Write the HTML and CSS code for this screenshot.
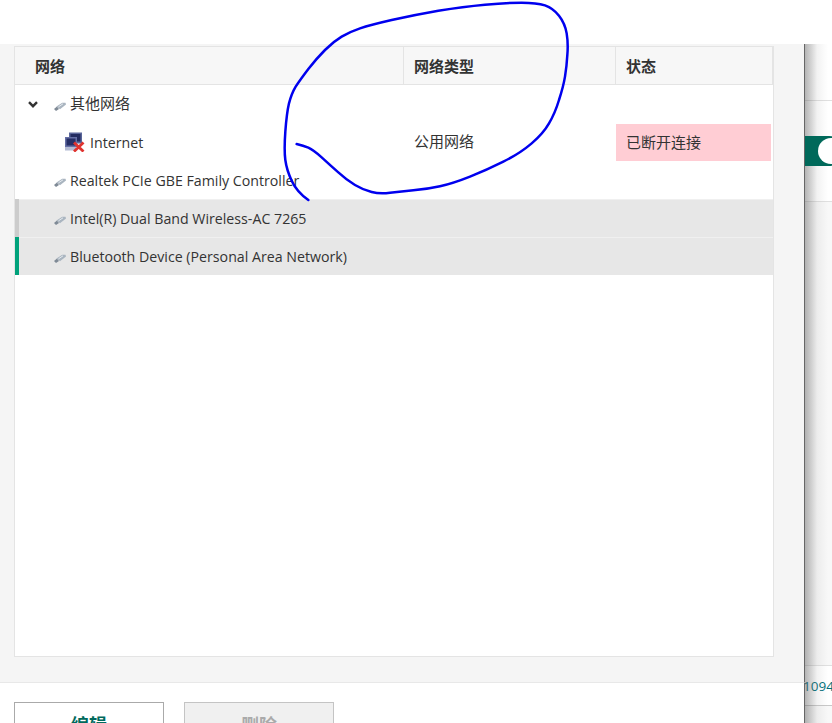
FILE: index.html
```html
<!DOCTYPE html>
<html lang="zh">
<head>
<meta charset="utf-8">
<title>网络</title>
<link rel="stylesheet" href="styles.css">
</head>
<body>
<div class="page">
  <main class="panel">
    <div class="panel-top"></div>
    <div class="panel-body">
      <div class="table">
        <div class="thead">
          <div class="th th-first">网络</div>
          <div class="th">网络类型</div>
          <div class="th">状态</div>
        </div>
        <div class="row">
          <div class="cell name name-group">
            <svg class="chevron" viewBox="0 0 10 7"><path d="M1 1.2l4 4 4-4" fill="none" stroke="#333" stroke-width="2.4"/></svg>
            <svg class="plug" viewBox="0 0 12 9"><path d="M0 7l3-2.5 2 2.5-3 2z" fill="#7f8a96"/><path d="M2.5 4.5L8.2 0.8l3.3 0 .5 1.8-6 4.6z" fill="#aab5c0"/><path d="M4.5 4.8l4.5-3" stroke="#e6ebf0" stroke-width="1"/></svg>
            <span class="zh">其他网络</span>
          </div>
          <div class="cell"></div>
          <div class="cell"></div>
        </div>
        <div class="row">
          <div class="cell name name-child">
            <svg class="net" viewBox="0 0 20 20">
              <rect x="4" y="0.5" width="13" height="11" fill="#5a669a"/>
              <rect x="5.5" y="2" width="10" height="7.5" fill="#232c60"/>
              <rect x="0" y="5" width="12" height="10" fill="#6670a6"/>
              <rect x="1.5" y="6.5" width="9" height="7" fill="#262f66"/>
              <rect x="0" y="15" width="11" height="3.5" fill="#b4bbd4"/>
              <path d="M9 10.5l9.5 9M18.5 10.5l-9.5 9" stroke="#e0332f" stroke-width="2.8"/>
            </svg>
            <span>Internet</span>
          </div>
          <div class="cell zh">公用网络</div>
          <div class="cell zh status-off">已断开连接</div>
        </div>
        <div class="row">
          <div class="cell name">
            <svg class="plug" viewBox="0 0 12 9"><path d="M0 7l3-2.5 2 2.5-3 2z" fill="#7f8a96"/><path d="M2.5 4.5L8.2 0.8l3.3 0 .5 1.8-6 4.6z" fill="#aab5c0"/><path d="M4.5 4.8l4.5-3" stroke="#e6ebf0" stroke-width="1"/></svg>
            <span>Realtek PCIe GBE Family Controller</span>
          </div>
          <div class="cell"></div>
          <div class="cell"></div>
        </div>
        <div class="row row-grey">
          <div class="cell name">
            <svg class="plug" viewBox="0 0 12 9"><path d="M0 7l3-2.5 2 2.5-3 2z" fill="#7f8a96"/><path d="M2.5 4.5L8.2 0.8l3.3 0 .5 1.8-6 4.6z" fill="#aab5c0"/><path d="M4.5 4.8l4.5-3" stroke="#e6ebf0" stroke-width="1"/></svg>
            <span>Intel(R) Dual Band Wireless-AC 7265</span>
          </div>
          <div class="cell"></div>
          <div class="cell"></div>
        </div>
        <div class="row row-green">
          <div class="cell name">
            <svg class="plug" viewBox="0 0 12 9"><path d="M0 7l3-2.5 2 2.5-3 2z" fill="#7f8a96"/><path d="M2.5 4.5L8.2 0.8l3.3 0 .5 1.8-6 4.6z" fill="#aab5c0"/><path d="M4.5 4.8l4.5-3" stroke="#e6ebf0" stroke-width="1"/></svg>
            <span>Bluetooth Device (Personal Area Network)</span>
          </div>
          <div class="cell"></div>
          <div class="cell"></div>
        </div>
      </div>
    </div>
    <div class="panel-foot">
      <button class="btn btn-primary">编辑</button>
      <button class="btn btn-disabled" disabled>删除</button>
    </div>
  </main>
  <aside class="side">
    <div class="side-top"></div>
    <div class="side-row side-toggle"><span class="toggle"></span></div>
    <div class="side-fill"></div>
    <div class="side-row side-num">1094</div>
    <div class="side-end"></div>
  </aside>
  <svg class="scribble" viewBox="0 0 900 630">
    <path d="M85 600Q50 575 35 542Q20 510 16 480Q12 450 16 395Q20 340 27 310Q35 280 47 260Q60 240 85 207Q110 175 135 150Q160 125 185 110Q210 95 240 85Q270 75 335 60Q400 45 475 32Q550 20 615 14Q680 8 725 8Q770 8 795 16Q820 25 837 47Q855 70 860 100Q865 130 862 165Q860 200 855 230Q850 260 837 300Q825 340 807 370Q790 400 755 430Q720 460 670 485Q620 510 570 530Q520 550 480 559Q440 568 400 571Q360 575 330 578Q300 582 275 576Q250 570 225 555Q200 540 175 517Q150 495 125 472Q100 450 85 443Q70 437 50 432" fill="none" stroke="#0000ee" stroke-width="7.5" stroke-linecap="round"/>
  </svg>
</div>
</body>
</html>
```

FILE: styles.css
```css
* { box-sizing: border-box; }
html, body { margin: 0; padding: 0; }
body {
  width: 832px;
  height: 723px;
  overflow: hidden;
  background: #fff;
  color: #333;
  font-family: "Open Sans", "Noto Sans CJK SC", sans-serif;
  font-size: 14px;
}
.page { position: relative; display: flex; width: 832px; height: 723px; overflow: hidden; }

.panel { width: 805px; height: 723px; flex: none; display: flex; flex-direction: column; position: relative; z-index: 2; }
.panel-top { height: 44px; flex: none; background: #fff; }
.panel-body { height: 639px; flex: none; padding: 2px 30px 25px 14px; background: #f5f5f5; border-bottom: 1px solid #e8e8e8; border-right: 1px solid #666; }
.panel-foot { height: 40px; flex: none; overflow: hidden; display: flex; gap: 20px; padding: 19px 0 0 14px; background: #fff; border-right: 1px solid #666; }

.table { width: 760px; height: 611px; background: #fff; border: 1px solid #e4e4e4; }
.thead { display: grid; grid-template-columns: 389px 212px 157px; height: 38px; background: #f7f7f7; border-bottom: 1px solid #e4e4e4; }
.th { display: flex; align-items: center; padding-left: 10px; font-size: 15px; font-weight: 700; border-right: 1px solid #e4e4e4; }
.th-first { padding-left: 20px; }

.row { display: grid; grid-template-columns: 385px 212px 156px; width: 758px; height: 38px; padding-right: 1px; border-left: 4px solid transparent; }
.row-grey, .row-green { background: #e7e7e7; box-shadow: inset 0 1px 0 #f0f0f0; }
.row-grey { border-left-color: #ccc; background-clip: padding-box; }
.row-green { border-left-color: #00a27b; background-clip: padding-box; }
.cell { display: flex; align-items: center; padding-left: 10px; white-space: nowrap; font-size: 14.2px; }
.zh { font-size: 15px; line-height: 22px; margin-bottom: 2px; }
.cell.zh { font-size: 15px; padding-bottom: 2px; margin-bottom: 0; }
.name { padding-left: 35px; }
.name-group { padding-left: 9px; }
.name-child { padding-left: 46px; }
.status-off { background: #ffcdd4; margin: 1px 1px 0 0; }

.chevron { width: 10px; height: 7px; flex: none; margin-right: 16px; }
.plug { width: 12px; height: 9px; flex: none; margin-right: 4px; margin-top: 5px; }
.net { width: 20px; height: 20px; flex: none; margin-right: 5px; margin-bottom: 1px; }

.btn { width: 150px; height: 60px; flex: none; padding: 10px 0 24px; line-height: 24px; font-family: inherit; font-size: 18px; font-weight: 700; text-align: center; align-self: flex-start; }
.btn-primary { background: #fff; border: 1px solid #aaa; color: #00695c; }
.btn-disabled { background: #f0f0f0; border: 1px solid #c4c4c4; color: #aaa; }

.side { flex: 1; display: flex; flex-direction: column; position: relative; background: #fff; overflow: hidden; }
.side::after { content: ""; position: absolute; left: 0; right: 0; top: 44px; bottom: 0; background: linear-gradient(to right, rgba(90,90,90,.45), rgba(150,150,150,.12) 45%, rgba(200,200,200,0) 85%); }
.side-top { height: 101px; flex: none; border-bottom: 1px solid #e0e0e0; }
.side-toggle { height: 101px; flex: none; display: flex; align-items: center; border-bottom: 1px solid #e0e0e0; }
.toggle { display: block; width: 40px; height: 30px; flex: none; margin-left: -1px; border-radius: 0 15px 15px 0; background: #00695a; position: relative; z-index: 1; }
.toggle::after { content: ""; position: absolute; left: 14px; top: 2px; width: 26px; height: 26px; border-radius: 50%; background: #fff; }
.side-fill { flex: 1; background: #f8f8f8; }
.side-num { height: 41px; flex: none; line-height: 41px; margin-left: -2px; color: #00707a; border-top: 1px solid #e0e0e0; border-bottom: 1px solid #c8c8c8; white-space: nowrap; font-size: 13.5px; }
.side-end { height: 17px; flex: none; background: #f8f8f8; }

.scribble { position: absolute; left: 280px; top: 0; width: 300px; height: 210px; z-index: 3; }
```
